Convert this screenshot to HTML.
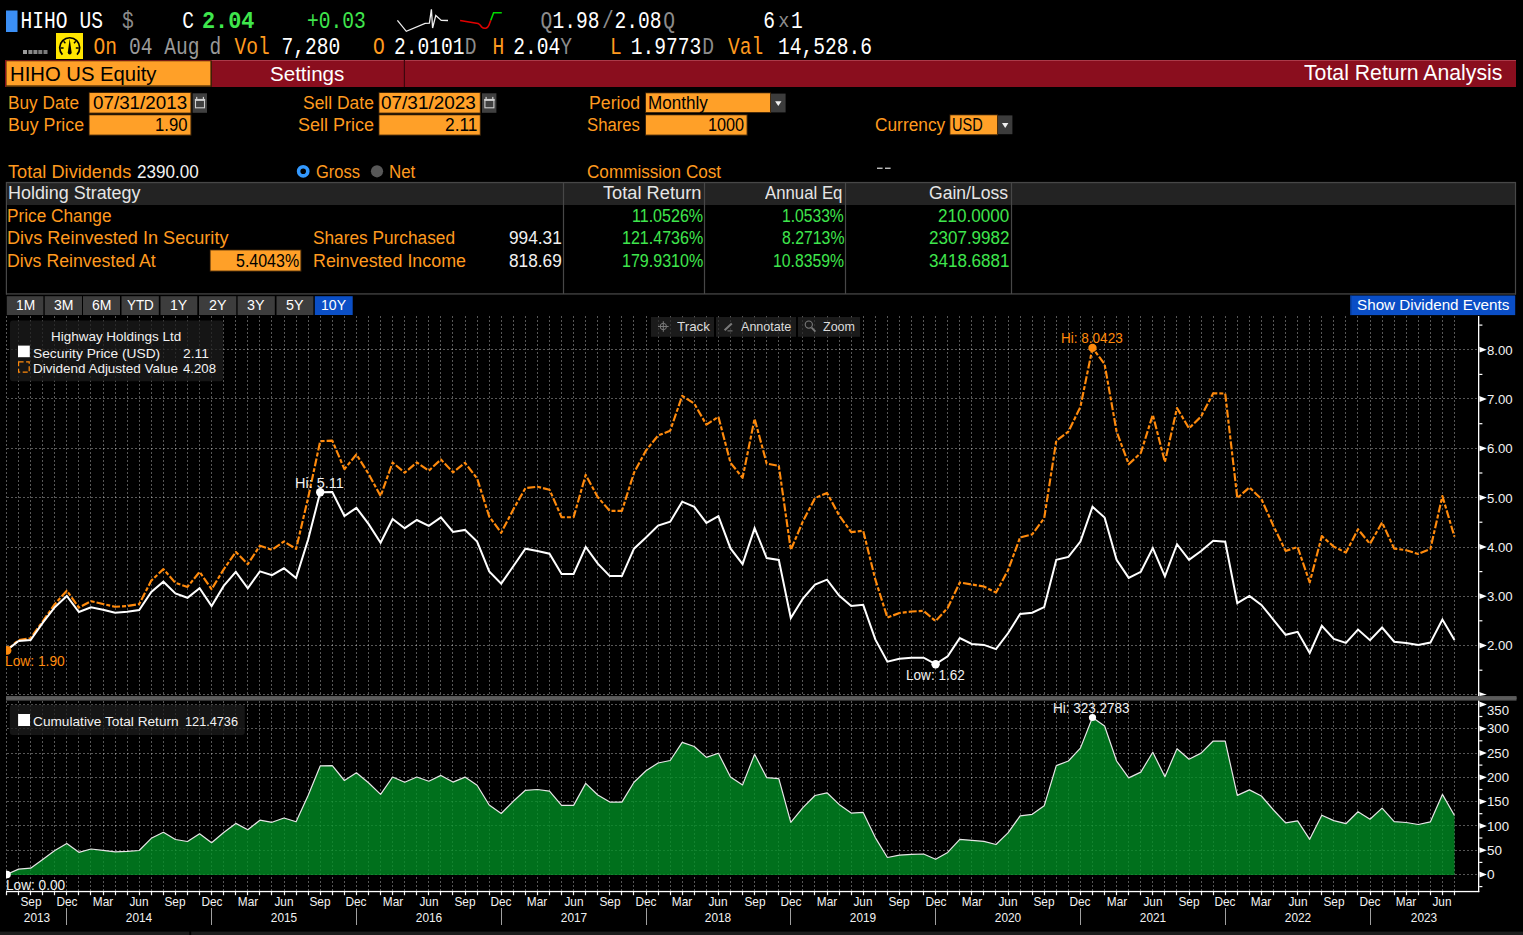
<!DOCTYPE html>
<html><head><meta charset="utf-8"><title>HIHO US Equity - Total Return Analysis</title>
<style>
html,body{margin:0;padding:0;background:#000;}
body{width:1523px;height:935px;position:relative;overflow:hidden;font-family:"Liberation Sans",sans-serif;}
svg{position:absolute;left:0;top:0;}
.a{position:absolute;white-space:pre;line-height:1;}
</style></head><body>
<svg width="1523" height="935" viewBox="0 0 1523 935">
<defs><clipPath id="cl"><rect x="6" y="300" width="1500" height="600"/></clipPath></defs>
<rect x="6" y="10.5" width="11.5" height="21.5" fill="#3b8ff5"/>
<polyline fill="none" stroke="#eee" stroke-width="1.3" stroke-linejoin="miter" points="397.4,20.4 406.3,31.3 425.1,23.4 429.4,23.1 431.4,9.3 432.6,28 435.8,15.4 441.3,20.4 448,20.5"/>
<path fill="none" stroke="#e00000" stroke-width="1.6" d="M460.1,20.5 L478,23.4 Q480,24.5 481.5,26.8 Q483.5,28.6 485.8,28.2 Q488,27.5 488.9,25.2 L490.8,20.2"/>
<polyline fill="none" stroke="#00d800" stroke-width="1.6" points="490.8,20.2 493.6,12.7 501.8,12.7"/>
<rect x="23" y="50" width="4" height="4" fill="#9c9c9c"/>
<rect x="28.4" y="50" width="4" height="4" fill="#8a8a8a"/>
<rect x="33.4" y="50" width="4" height="4" fill="#888"/>
<rect x="38.3" y="50" width="4" height="4" fill="#7c7c7c"/>
<rect x="43.5" y="50" width="4" height="4" fill="#7c7c7c"/>
<rect x="56" y="33" width="27" height="26" fill="#ffe600"/>
<g fill="none" stroke="#000" stroke-width="1.7" stroke-linecap="butt"><path d="M62.4,54.6 A10,10 0 1 1 77.0,54.6"/><path d="M60.6,48 L63.6,48 M75.8,48 L78.8,48 M63.6,41.2 L65.4,43.2 M75.8,41.2 L74,43.2" stroke-width="1.4"/></g>
<path d="M69.7,38.8 L71.6,52.2 Q71.7,54.6 69.7,54.6 Q67.7,54.6 67.8,52.2 Z" fill="#000"/>
<rect x="5" y="60" width="1511" height="27" fill="#8a0e1e"/>
<rect x="211.5" y="60" width="1304.5" height="1" fill="#ab3a49"/>
<rect x="6" y="60.6" width="206" height="26.4" fill="#5a3508"/>
<rect x="6.6" y="61.3" width="204" height="24" fill="#ffa028"/>
<rect x="210.6" y="61" width="1.2" height="26" fill="#3a1a08"/>
<rect x="403.8" y="60" width="1.2" height="27" fill="#3d060d"/>
<rect x="88.8" y="92.2" width="102.60000000000001" height="21.399999999999995" fill="#4a2c0a"/>
<rect x="89.6" y="93" width="100.80000000000001" height="19.599999999999994" fill="#ffa028"/>
<rect x="192.6" y="93.3" width="14.4" height="19.5" fill="#404040"/>
<rect x="195.5" y="99.6" width="9" height="8.2" fill="none" stroke="#d0d0d0" stroke-width="1.1"/>
<rect x="194.9" y="98.89999999999999" width="10.2" height="2" fill="#d0d0d0"/>
<rect x="196.1" y="96.89999999999999" width="1.2" height="2.4" fill="#d0d0d0"/><rect x="202.79999999999998" y="96.89999999999999" width="1.2" height="2.4" fill="#d0d0d0"/>
<rect x="88.8" y="114.5" width="102.60000000000001" height="21.099999999999998" fill="#4a2c0a"/>
<rect x="89.6" y="115.3" width="100.80000000000001" height="19.299999999999997" fill="#ffa028"/>
<rect x="378.59999999999997" y="92.2" width="102.20000000000003" height="21.399999999999995" fill="#4a2c0a"/>
<rect x="379.4" y="93" width="100.40000000000003" height="19.599999999999994" fill="#ffa028"/>
<rect x="482" y="93.3" width="14.4" height="19.5" fill="#404040"/>
<rect x="484.9" y="99.6" width="9" height="8.2" fill="none" stroke="#d0d0d0" stroke-width="1.1"/>
<rect x="484.3" y="98.89999999999999" width="10.2" height="2" fill="#d0d0d0"/>
<rect x="485.5" y="96.89999999999999" width="1.2" height="2.4" fill="#d0d0d0"/><rect x="492.2" y="96.89999999999999" width="1.2" height="2.4" fill="#d0d0d0"/>
<rect x="378.59999999999997" y="114.5" width="102.20000000000003" height="21.099999999999998" fill="#4a2c0a"/>
<rect x="379.4" y="115.3" width="100.40000000000003" height="19.299999999999997" fill="#ffa028"/>
<rect x="645.2" y="92.5" width="125.8" height="20.500000000000004" fill="#4a2c0a"/>
<rect x="646" y="93.3" width="124" height="18.700000000000003" fill="#ffa028"/>
<rect x="771" y="93.6" width="14.6" height="18.8" fill="#3c3c3c"/>
<path d="M775.0999999999999,101.3 L781.5,101.3 L778.3,106.1 Z" fill="#f0f0f0"/>
<rect x="645.2" y="114.5" width="102.40000000000002" height="21.099999999999998" fill="#4a2c0a"/>
<rect x="646" y="115.3" width="100.60000000000002" height="19.299999999999997" fill="#ffa028"/>
<rect x="949.6" y="114.5" width="48.40000000000002" height="20.699999999999992" fill="#4a2c0a"/>
<rect x="950.4" y="115.3" width="46.60000000000002" height="18.89999999999999" fill="#ffa028"/>
<rect x="998" y="115.4" width="14.4" height="18.8" fill="#3c3c3c"/>
<path d="M1002.0,123.10000000000001 L1008.4000000000001,123.10000000000001 L1005.2,127.9 Z" fill="#f0f0f0"/>
<circle cx="303.2" cy="171.3" r="4.6" fill="#000" stroke="#3399ff" stroke-width="3.6"/>
<circle cx="377" cy="171.3" r="6.1" fill="#585858"/>
<rect x="877" y="167.6" width="5.6" height="1.3" fill="#d0d0d0"/><rect x="885" y="167.6" width="5.6" height="1.3" fill="#d0d0d0"/>
<rect x="6" y="182" width="1510" height="23" fill="#232323"/>
<rect x="6" y="181.9" width="1510" height="1.3" fill="#474747"/>
<rect x="6" y="293" width="1510" height="1.8" fill="#323232"/>
<rect x="5.8" y="182" width="1.2" height="112.5" fill="#474747"/><rect x="1514.9" y="182" width="1.2" height="112.5" fill="#474747"/>
<rect x="562.9" y="182" width="1.2" height="112" fill="#474747"/>
<rect x="703.9" y="182" width="1.2" height="112" fill="#474747"/>
<rect x="844.9" y="182" width="1.2" height="112" fill="#474747"/>
<rect x="1010.9" y="182" width="1.2" height="112" fill="#474747"/>
<rect x="209.79999999999998" y="249.6" width="91.59999999999998" height="22.000000000000018" fill="#4a2c0a"/>
<rect x="210.6" y="250.4" width="89.79999999999998" height="20.200000000000017" fill="#ffa028"/>
<rect x="6.8" y="296.2" width="36.6" height="18.8" fill="#3d3d3d"/>
<rect x="44.7" y="296.2" width="37.3" height="18.8" fill="#3d3d3d"/>
<rect x="83" y="296.2" width="37" height="18.8" fill="#3d3d3d"/>
<rect x="121.5" y="296.2" width="37.30000000000001" height="18.8" fill="#3d3d3d"/>
<rect x="160.5" y="296.2" width="36.80000000000001" height="18.8" fill="#3d3d3d"/>
<rect x="199" y="296.2" width="37.30000000000001" height="18.8" fill="#3d3d3d"/>
<rect x="237.6" y="296.2" width="37.20000000000002" height="18.8" fill="#3d3d3d"/>
<rect x="276.5" y="296.2" width="36.89999999999998" height="18.8" fill="#3d3d3d"/>
<rect x="314.8" y="296.2" width="37.89999999999998" height="18.8" fill="#0b4fc6"/>
<rect x="1350.3" y="295.5" width="164.9" height="19.6" fill="#0a4ec6"/><rect x="1350.3" y="295.5" width="1.2" height="19.6" fill="#063a94"/>
<g stroke="rgba(255,255,255,0.34)" stroke-width="1" stroke-dasharray="2 2" shape-rendering="crispEdges" fill="none"><path d="M6.5,316V695.5M6.5,701V891"/><path d="M18.5,316V695.5M18.5,701V891"/><path d="M30.5,316V695.5M30.5,701V891"/><path d="M42.5,316V695.5M42.5,701V891"/><path d="M54.5,316V695.5M54.5,701V891"/><path d="M66.5,316V695.5M66.5,701V891"/><path d="M78.5,316V695.5M78.5,701V891"/><path d="M90.5,316V695.5M90.5,701V891"/><path d="M103.5,316V695.5M103.5,701V891"/><path d="M115.5,316V695.5M115.5,701V891"/><path d="M127.5,316V695.5M127.5,701V891"/><path d="M139.5,316V695.5M139.5,701V891"/><path d="M151.5,316V695.5M151.5,701V891"/><path d="M163.5,316V695.5M163.5,701V891"/><path d="M175.5,316V695.5M175.5,701V891"/><path d="M187.5,316V695.5M187.5,701V891"/><path d="M199.5,316V695.5M199.5,701V891"/><path d="M211.5,316V695.5M211.5,701V891"/><path d="M223.5,316V695.5M223.5,701V891"/><path d="M235.5,316V695.5M235.5,701V891"/><path d="M247.5,316V695.5M247.5,701V891"/><path d="M259.5,316V695.5M259.5,701V891"/><path d="M271.5,316V695.5M271.5,701V891"/><path d="M284.5,316V695.5M284.5,701V891"/><path d="M296.5,316V695.5M296.5,701V891"/><path d="M308.5,316V695.5M308.5,701V891"/><path d="M320.5,316V695.5M320.5,701V891"/><path d="M332.5,316V695.5M332.5,701V891"/><path d="M344.5,316V695.5M344.5,701V891"/><path d="M356.5,316V695.5M356.5,701V891"/><path d="M368.5,316V695.5M368.5,701V891"/><path d="M380.5,316V695.5M380.5,701V891"/><path d="M392.5,316V695.5M392.5,701V891"/><path d="M404.5,316V695.5M404.5,701V891"/><path d="M416.5,316V695.5M416.5,701V891"/><path d="M428.5,316V695.5M428.5,701V891"/><path d="M440.5,316V695.5M440.5,701V891"/><path d="M452.5,316V695.5M452.5,701V891"/><path d="M465.5,316V695.5M465.5,701V891"/><path d="M477.5,316V695.5M477.5,701V891"/><path d="M489.5,316V695.5M489.5,701V891"/><path d="M501.5,316V695.5M501.5,701V891"/><path d="M513.5,316V695.5M513.5,701V891"/><path d="M525.5,316V695.5M525.5,701V891"/><path d="M537.5,316V695.5M537.5,701V891"/><path d="M549.5,316V695.5M549.5,701V891"/><path d="M561.5,316V695.5M561.5,701V891"/><path d="M573.5,316V695.5M573.5,701V891"/><path d="M585.5,316V695.5M585.5,701V891"/><path d="M597.5,316V695.5M597.5,701V891"/><path d="M609.5,316V695.5M609.5,701V891"/><path d="M621.5,316V695.5M621.5,701V891"/><path d="M633.5,316V695.5M633.5,701V891"/><path d="M646.5,316V695.5M646.5,701V891"/><path d="M658.5,316V695.5M658.5,701V891"/><path d="M670.5,316V695.5M670.5,701V891"/><path d="M682.5,316V695.5M682.5,701V891"/><path d="M694.5,316V695.5M694.5,701V891"/><path d="M706.5,316V695.5M706.5,701V891"/><path d="M718.5,316V695.5M718.5,701V891"/><path d="M730.5,316V695.5M730.5,701V891"/><path d="M742.5,316V695.5M742.5,701V891"/><path d="M754.5,316V695.5M754.5,701V891"/><path d="M766.5,316V695.5M766.5,701V891"/><path d="M778.5,316V695.5M778.5,701V891"/><path d="M790.5,316V695.5M790.5,701V891"/><path d="M802.5,316V695.5M802.5,701V891"/><path d="M814.5,316V695.5M814.5,701V891"/><path d="M827.5,316V695.5M827.5,701V891"/><path d="M839.5,316V695.5M839.5,701V891"/><path d="M851.5,316V695.5M851.5,701V891"/><path d="M863.5,316V695.5M863.5,701V891"/><path d="M875.5,316V695.5M875.5,701V891"/><path d="M887.5,316V695.5M887.5,701V891"/><path d="M899.5,316V695.5M899.5,701V891"/><path d="M911.5,316V695.5M911.5,701V891"/><path d="M923.5,316V695.5M923.5,701V891"/><path d="M935.5,316V695.5M935.5,701V891"/><path d="M947.5,316V695.5M947.5,701V891"/><path d="M959.5,316V695.5M959.5,701V891"/><path d="M971.5,316V695.5M971.5,701V891"/><path d="M983.5,316V695.5M983.5,701V891"/><path d="M995.5,316V695.5M995.5,701V891"/><path d="M1008.5,316V695.5M1008.5,701V891"/><path d="M1020.5,316V695.5M1020.5,701V891"/><path d="M1032.5,316V695.5M1032.5,701V891"/><path d="M1044.5,316V695.5M1044.5,701V891"/><path d="M1056.5,316V695.5M1056.5,701V891"/><path d="M1068.5,316V695.5M1068.5,701V891"/><path d="M1080.5,316V695.5M1080.5,701V891"/><path d="M1092.5,316V695.5M1092.5,701V891"/><path d="M1104.5,316V695.5M1104.5,701V891"/><path d="M1116.5,316V695.5M1116.5,701V891"/><path d="M1128.5,316V695.5M1128.5,701V891"/><path d="M1140.5,316V695.5M1140.5,701V891"/><path d="M1152.5,316V695.5M1152.5,701V891"/><path d="M1164.5,316V695.5M1164.5,701V891"/><path d="M1176.5,316V695.5M1176.5,701V891"/><path d="M1189.5,316V695.5M1189.5,701V891"/><path d="M1201.5,316V695.5M1201.5,701V891"/><path d="M1213.5,316V695.5M1213.5,701V891"/><path d="M1225.5,316V695.5M1225.5,701V891"/><path d="M1237.5,316V695.5M1237.5,701V891"/><path d="M1249.5,316V695.5M1249.5,701V891"/><path d="M1261.5,316V695.5M1261.5,701V891"/><path d="M1273.5,316V695.5M1273.5,701V891"/><path d="M1285.5,316V695.5M1285.5,701V891"/><path d="M1297.5,316V695.5M1297.5,701V891"/><path d="M1309.5,316V695.5M1309.5,701V891"/><path d="M1321.5,316V695.5M1321.5,701V891"/><path d="M1333.5,316V695.5M1333.5,701V891"/><path d="M1345.5,316V695.5M1345.5,701V891"/><path d="M1357.5,316V695.5M1357.5,701V891"/><path d="M1370.5,316V695.5M1370.5,701V891"/><path d="M1382.5,316V695.5M1382.5,701V891"/><path d="M1394.5,316V695.5M1394.5,701V891"/><path d="M1406.5,316V695.5M1406.5,701V891"/><path d="M1418.5,316V695.5M1418.5,701V891"/><path d="M1430.5,316V695.5M1430.5,701V891"/><path d="M1442.5,316V695.5M1442.5,701V891"/><path d="M1454.5,316V695.5M1454.5,701V891"/><path d="M7,694.5H1478"/><path d="M7,645.5H1478"/><path d="M7,596.5H1478"/><path d="M7,547.5H1478"/><path d="M7,497.5H1478"/><path d="M7,448.5H1478"/><path d="M7,398.5H1478"/><path d="M7,349.5H1478"/><path d="M7,874.5H1478"/><path d="M7,850.5H1478"/><path d="M7,825.5H1478"/><path d="M7,801.5H1478"/><path d="M7,777.5H1478"/><path d="M7,753.5H1478"/><path d="M7,728.5H1478"/><path d="M7,704.5H1478"/></g>
<polygon points="6.5,875 6.5,874.5 18.6,869.1 30.6,868.2 42.7,859.4 54.8,850.5 66.8,843.5 78.9,852.3 91.0,849.0 103.0,850.4 115.1,851.9 127.2,851.4 139.2,850.5 151.3,838.3 163.4,832.3 175.4,839.5 187.5,841.5 199.6,833.8 211.6,842.7 223.7,832.5 235.8,823.4 247.8,829.8 259.9,820.2 272.0,822.3 284.0,818.0 296.1,821.8 308.2,795.2 320.2,765.9 332.3,765.6 344.4,780.5 356.4,772.8 368.5,782.8 380.6,794.4 392.6,777.0 404.7,782.3 416.8,777.0 428.8,781.2 440.9,775.4 453.0,782.1 465.0,777.1 477.1,785.2 489.2,805.0 501.2,813.5 513.3,801.3 525.4,790.3 537.4,789.5 549.5,791.1 561.6,805.4 573.6,805.4 585.7,783.4 597.8,795.0 609.8,802.1 621.9,802.1 634.0,782.3 646.0,770.8 658.1,763.0 670.2,760.5 682.2,742.4 694.3,746.5 706.4,757.4 718.4,753.2 730.5,777.1 742.6,784.9 754.6,754.3 766.7,777.6 778.8,778.7 790.8,822.3 802.9,807.6 815.0,795.5 827.0,792.8 839.1,804.4 851.2,813.1 863.2,812.4 875.3,837.6 887.4,857.5 899.4,855.1 911.5,854.3 923.6,854.0 935.6,859.3 947.7,852.4 959.8,839.3 971.8,840.3 983.9,841.3 996.0,844.5 1008.0,832.9 1020.1,815.9 1032.2,814.3 1044.2,805.8 1056.3,765.6 1068.4,761.0 1080.4,748.1 1092.5,717.5 1104.6,726.0 1116.6,761.0 1128.7,777.9 1140.8,772.1 1152.8,752.2 1164.9,776.7 1177.0,748.7 1189.0,759.2 1201.1,753.1 1213.2,741.0 1225.2,741.2 1237.3,795.4 1249.4,789.9 1261.4,796.0 1273.5,810.0 1285.6,822.9 1297.6,820.8 1309.7,839.3 1321.8,815.2 1333.8,820.6 1345.9,823.7 1358.0,811.7 1370.0,819.2 1382.1,808.1 1394.2,821.7 1406.2,822.5 1418.3,824.5 1430.4,821.8 1442.4,794.4 1454.5,815.5 1454.5,875" fill="rgb(0,143,36)" fill-opacity="0.78"/>
<polyline points="6.5,874.5 18.6,869.1 30.6,868.2 42.7,859.4 54.8,850.5 66.8,843.5 78.9,852.3 91.0,849.0 103.0,850.4 115.1,851.9 127.2,851.4 139.2,850.5 151.3,838.3 163.4,832.3 175.4,839.5 187.5,841.5 199.6,833.8 211.6,842.7 223.7,832.5 235.8,823.4 247.8,829.8 259.9,820.2 272.0,822.3 284.0,818.0 296.1,821.8 308.2,795.2 320.2,765.9 332.3,765.6 344.4,780.5 356.4,772.8 368.5,782.8 380.6,794.4 392.6,777.0 404.7,782.3 416.8,777.0 428.8,781.2 440.9,775.4 453.0,782.1 465.0,777.1 477.1,785.2 489.2,805.0 501.2,813.5 513.3,801.3 525.4,790.3 537.4,789.5 549.5,791.1 561.6,805.4 573.6,805.4 585.7,783.4 597.8,795.0 609.8,802.1 621.9,802.1 634.0,782.3 646.0,770.8 658.1,763.0 670.2,760.5 682.2,742.4 694.3,746.5 706.4,757.4 718.4,753.2 730.5,777.1 742.6,784.9 754.6,754.3 766.7,777.6 778.8,778.7 790.8,822.3 802.9,807.6 815.0,795.5 827.0,792.8 839.1,804.4 851.2,813.1 863.2,812.4 875.3,837.6 887.4,857.5 899.4,855.1 911.5,854.3 923.6,854.0 935.6,859.3 947.7,852.4 959.8,839.3 971.8,840.3 983.9,841.3 996.0,844.5 1008.0,832.9 1020.1,815.9 1032.2,814.3 1044.2,805.8 1056.3,765.6 1068.4,761.0 1080.4,748.1 1092.5,717.5 1104.6,726.0 1116.6,761.0 1128.7,777.9 1140.8,772.1 1152.8,752.2 1164.9,776.7 1177.0,748.7 1189.0,759.2 1201.1,753.1 1213.2,741.0 1225.2,741.2 1237.3,795.4 1249.4,789.9 1261.4,796.0 1273.5,810.0 1285.6,822.9 1297.6,820.8 1309.7,839.3 1321.8,815.2 1333.8,820.6 1345.9,823.7 1358.0,811.7 1370.0,819.2 1382.1,808.1 1394.2,821.7 1406.2,822.5 1418.3,824.5 1430.4,821.8 1442.4,794.4 1454.5,815.5" fill="none" stroke="#e6e6e6" stroke-width="1.2" stroke-linejoin="round"/>
<g fill="#262626" fill-opacity="0.72"><rect x="651" y="317" width="63" height="19.8"/><rect x="716" y="317" width="80" height="19.8"/><rect x="798" y="317" width="62" height="19.8"/></g>
<rect x="10" y="320.5" width="213.2" height="60.8" rx="3" fill="#1c1c1c" fill-opacity="0.76"/>
<rect x="9.8" y="704.8" width="235" height="30.2" rx="3" fill="#1c1c1c" fill-opacity="0.76"/>
<rect x="6" y="696" width="1510.5" height="4.6" fill="#555"/><rect x="6" y="697.2" width="1510.5" height="2" fill="#5e5e5e"/>
<rect x="1478" y="316" width="1.3" height="380" fill="#fff"/><rect x="1478" y="700.6" width="1.3" height="191.5" fill="#fff"/>
<rect x="6" y="890.9" width="1473.3" height="1.3" fill="#fff"/>
<path d="M1479.2,692.0 L1486.9,694.8 L1479.6,696.0 Z" fill="#fff"/><rect x="1479.2" y="669.6" width="3.2" height="1.2" fill="#fff"/><path d="M1479.2,642.6 L1486.9,645.5 L1479.6,648.4 Z" fill="#fff"/><rect x="1479.2" y="620.2" width="3.2" height="1.2" fill="#fff"/><path d="M1479.2,593.3 L1486.9,596.2 L1479.6,599.1 Z" fill="#fff"/><rect x="1479.2" y="571.0" width="3.2" height="1.2" fill="#fff"/><path d="M1479.2,544.0 L1486.9,546.9 L1479.6,549.8 Z" fill="#fff"/><rect x="1479.2" y="521.6" width="3.2" height="1.2" fill="#fff"/><path d="M1479.2,494.7 L1486.9,497.6 L1479.6,500.5 Z" fill="#fff"/><rect x="1479.2" y="472.4" width="3.2" height="1.2" fill="#fff"/><path d="M1479.2,445.4 L1486.9,448.3 L1479.6,451.2 Z" fill="#fff"/><rect x="1479.2" y="423.1" width="3.2" height="1.2" fill="#fff"/><path d="M1479.2,396.1 L1486.9,399.0 L1479.6,401.9 Z" fill="#fff"/><rect x="1479.2" y="373.8" width="3.2" height="1.2" fill="#fff"/><path d="M1479.2,346.8 L1486.9,349.7 L1479.6,352.6 Z" fill="#fff"/><rect x="1479.2" y="324.5" width="3.2" height="1.2" fill="#fff"/><path d="M1479.2,871.6 L1486.9,874.5 L1479.6,877.4 Z" fill="#fff"/><rect x="1479.2" y="886.0" width="3.2" height="1.2" fill="#fff"/><path d="M1479.2,847.3 L1486.9,850.2 L1479.6,853.1 Z" fill="#fff"/><rect x="1479.2" y="861.8" width="3.2" height="1.2" fill="#fff"/><path d="M1479.2,823.0 L1486.9,825.9 L1479.6,828.8 Z" fill="#fff"/><rect x="1479.2" y="837.4" width="3.2" height="1.2" fill="#fff"/><path d="M1479.2,798.7 L1486.9,801.6 L1479.6,804.5 Z" fill="#fff"/><rect x="1479.2" y="813.1" width="3.2" height="1.2" fill="#fff"/><path d="M1479.2,774.4 L1486.9,777.3 L1479.6,780.2 Z" fill="#fff"/><rect x="1479.2" y="788.9" width="3.2" height="1.2" fill="#fff"/><path d="M1479.2,750.1 L1486.9,753.0 L1479.6,755.9 Z" fill="#fff"/><rect x="1479.2" y="764.5" width="3.2" height="1.2" fill="#fff"/><path d="M1479.2,725.8 L1486.9,728.7 L1479.6,731.6 Z" fill="#fff"/><rect x="1479.2" y="740.2" width="3.2" height="1.2" fill="#fff"/><path d="M1479.2,701.5 L1486.9,704.4 L1479.6,707.3 Z" fill="#fff"/><rect x="1479.2" y="715.9" width="3.2" height="1.2" fill="#fff"/><rect x="5.9" y="892" width="1.2" height="3.2" fill="#f4f4f4"/><rect x="17.9" y="892" width="1.2" height="3.2" fill="#f4f4f4"/><rect x="29.9" y="892" width="1.2" height="3.2" fill="#f4f4f4"/><rect x="41.9" y="892" width="1.2" height="3.2" fill="#f4f4f4"/><rect x="53.9" y="892" width="1.2" height="3.2" fill="#f4f4f4"/><rect x="65.9" y="892" width="1.2" height="3.2" fill="#f4f4f4"/><rect x="77.9" y="892" width="1.2" height="3.2" fill="#f4f4f4"/><rect x="89.9" y="892" width="1.2" height="3.2" fill="#f4f4f4"/><rect x="102.9" y="892" width="1.2" height="3.2" fill="#f4f4f4"/><rect x="114.9" y="892" width="1.2" height="3.2" fill="#f4f4f4"/><rect x="126.9" y="892" width="1.2" height="3.2" fill="#f4f4f4"/><rect x="138.9" y="892" width="1.2" height="3.2" fill="#f4f4f4"/><rect x="150.9" y="892" width="1.2" height="3.2" fill="#f4f4f4"/><rect x="162.9" y="892" width="1.2" height="3.2" fill="#f4f4f4"/><rect x="174.9" y="892" width="1.2" height="3.2" fill="#f4f4f4"/><rect x="186.9" y="892" width="1.2" height="3.2" fill="#f4f4f4"/><rect x="198.9" y="892" width="1.2" height="3.2" fill="#f4f4f4"/><rect x="210.9" y="892" width="1.2" height="3.2" fill="#f4f4f4"/><rect x="222.9" y="892" width="1.2" height="3.2" fill="#f4f4f4"/><rect x="234.9" y="892" width="1.2" height="3.2" fill="#f4f4f4"/><rect x="246.9" y="892" width="1.2" height="3.2" fill="#f4f4f4"/><rect x="258.9" y="892" width="1.2" height="3.2" fill="#f4f4f4"/><rect x="270.9" y="892" width="1.2" height="3.2" fill="#f4f4f4"/><rect x="283.9" y="892" width="1.2" height="3.2" fill="#f4f4f4"/><rect x="295.9" y="892" width="1.2" height="3.2" fill="#f4f4f4"/><rect x="307.9" y="892" width="1.2" height="3.2" fill="#f4f4f4"/><rect x="319.9" y="892" width="1.2" height="3.2" fill="#f4f4f4"/><rect x="331.9" y="892" width="1.2" height="3.2" fill="#f4f4f4"/><rect x="343.9" y="892" width="1.2" height="3.2" fill="#f4f4f4"/><rect x="355.9" y="892" width="1.2" height="3.2" fill="#f4f4f4"/><rect x="367.9" y="892" width="1.2" height="3.2" fill="#f4f4f4"/><rect x="379.9" y="892" width="1.2" height="3.2" fill="#f4f4f4"/><rect x="391.9" y="892" width="1.2" height="3.2" fill="#f4f4f4"/><rect x="403.9" y="892" width="1.2" height="3.2" fill="#f4f4f4"/><rect x="415.9" y="892" width="1.2" height="3.2" fill="#f4f4f4"/><rect x="427.9" y="892" width="1.2" height="3.2" fill="#f4f4f4"/><rect x="439.9" y="892" width="1.2" height="3.2" fill="#f4f4f4"/><rect x="451.9" y="892" width="1.2" height="3.2" fill="#f4f4f4"/><rect x="464.9" y="892" width="1.2" height="3.2" fill="#f4f4f4"/><rect x="476.9" y="892" width="1.2" height="3.2" fill="#f4f4f4"/><rect x="488.9" y="892" width="1.2" height="3.2" fill="#f4f4f4"/><rect x="500.9" y="892" width="1.2" height="3.2" fill="#f4f4f4"/><rect x="512.9" y="892" width="1.2" height="3.2" fill="#f4f4f4"/><rect x="524.9" y="892" width="1.2" height="3.2" fill="#f4f4f4"/><rect x="536.9" y="892" width="1.2" height="3.2" fill="#f4f4f4"/><rect x="548.9" y="892" width="1.2" height="3.2" fill="#f4f4f4"/><rect x="560.9" y="892" width="1.2" height="3.2" fill="#f4f4f4"/><rect x="572.9" y="892" width="1.2" height="3.2" fill="#f4f4f4"/><rect x="584.9" y="892" width="1.2" height="3.2" fill="#f4f4f4"/><rect x="596.9" y="892" width="1.2" height="3.2" fill="#f4f4f4"/><rect x="608.9" y="892" width="1.2" height="3.2" fill="#f4f4f4"/><rect x="620.9" y="892" width="1.2" height="3.2" fill="#f4f4f4"/><rect x="632.9" y="892" width="1.2" height="3.2" fill="#f4f4f4"/><rect x="645.9" y="892" width="1.2" height="3.2" fill="#f4f4f4"/><rect x="657.9" y="892" width="1.2" height="3.2" fill="#f4f4f4"/><rect x="669.9" y="892" width="1.2" height="3.2" fill="#f4f4f4"/><rect x="681.9" y="892" width="1.2" height="3.2" fill="#f4f4f4"/><rect x="693.9" y="892" width="1.2" height="3.2" fill="#f4f4f4"/><rect x="705.9" y="892" width="1.2" height="3.2" fill="#f4f4f4"/><rect x="717.9" y="892" width="1.2" height="3.2" fill="#f4f4f4"/><rect x="729.9" y="892" width="1.2" height="3.2" fill="#f4f4f4"/><rect x="741.9" y="892" width="1.2" height="3.2" fill="#f4f4f4"/><rect x="753.9" y="892" width="1.2" height="3.2" fill="#f4f4f4"/><rect x="765.9" y="892" width="1.2" height="3.2" fill="#f4f4f4"/><rect x="777.9" y="892" width="1.2" height="3.2" fill="#f4f4f4"/><rect x="789.9" y="892" width="1.2" height="3.2" fill="#f4f4f4"/><rect x="801.9" y="892" width="1.2" height="3.2" fill="#f4f4f4"/><rect x="813.9" y="892" width="1.2" height="3.2" fill="#f4f4f4"/><rect x="826.9" y="892" width="1.2" height="3.2" fill="#f4f4f4"/><rect x="838.9" y="892" width="1.2" height="3.2" fill="#f4f4f4"/><rect x="850.9" y="892" width="1.2" height="3.2" fill="#f4f4f4"/><rect x="862.9" y="892" width="1.2" height="3.2" fill="#f4f4f4"/><rect x="874.9" y="892" width="1.2" height="3.2" fill="#f4f4f4"/><rect x="886.9" y="892" width="1.2" height="3.2" fill="#f4f4f4"/><rect x="898.9" y="892" width="1.2" height="3.2" fill="#f4f4f4"/><rect x="910.9" y="892" width="1.2" height="3.2" fill="#f4f4f4"/><rect x="922.9" y="892" width="1.2" height="3.2" fill="#f4f4f4"/><rect x="934.9" y="892" width="1.2" height="3.2" fill="#f4f4f4"/><rect x="946.9" y="892" width="1.2" height="3.2" fill="#f4f4f4"/><rect x="958.9" y="892" width="1.2" height="3.2" fill="#f4f4f4"/><rect x="970.9" y="892" width="1.2" height="3.2" fill="#f4f4f4"/><rect x="982.9" y="892" width="1.2" height="3.2" fill="#f4f4f4"/><rect x="994.9" y="892" width="1.2" height="3.2" fill="#f4f4f4"/><rect x="1007.9" y="892" width="1.2" height="3.2" fill="#f4f4f4"/><rect x="1019.9" y="892" width="1.2" height="3.2" fill="#f4f4f4"/><rect x="1031.9" y="892" width="1.2" height="3.2" fill="#f4f4f4"/><rect x="1043.9" y="892" width="1.2" height="3.2" fill="#f4f4f4"/><rect x="1055.9" y="892" width="1.2" height="3.2" fill="#f4f4f4"/><rect x="1067.9" y="892" width="1.2" height="3.2" fill="#f4f4f4"/><rect x="1079.9" y="892" width="1.2" height="3.2" fill="#f4f4f4"/><rect x="1091.9" y="892" width="1.2" height="3.2" fill="#f4f4f4"/><rect x="1103.9" y="892" width="1.2" height="3.2" fill="#f4f4f4"/><rect x="1115.9" y="892" width="1.2" height="3.2" fill="#f4f4f4"/><rect x="1127.9" y="892" width="1.2" height="3.2" fill="#f4f4f4"/><rect x="1139.9" y="892" width="1.2" height="3.2" fill="#f4f4f4"/><rect x="1151.9" y="892" width="1.2" height="3.2" fill="#f4f4f4"/><rect x="1163.9" y="892" width="1.2" height="3.2" fill="#f4f4f4"/><rect x="1175.9" y="892" width="1.2" height="3.2" fill="#f4f4f4"/><rect x="1188.9" y="892" width="1.2" height="3.2" fill="#f4f4f4"/><rect x="1200.9" y="892" width="1.2" height="3.2" fill="#f4f4f4"/><rect x="1212.9" y="892" width="1.2" height="3.2" fill="#f4f4f4"/><rect x="1224.9" y="892" width="1.2" height="3.2" fill="#f4f4f4"/><rect x="1236.9" y="892" width="1.2" height="3.2" fill="#f4f4f4"/><rect x="1248.9" y="892" width="1.2" height="3.2" fill="#f4f4f4"/><rect x="1260.9" y="892" width="1.2" height="3.2" fill="#f4f4f4"/><rect x="1272.9" y="892" width="1.2" height="3.2" fill="#f4f4f4"/><rect x="1284.9" y="892" width="1.2" height="3.2" fill="#f4f4f4"/><rect x="1296.9" y="892" width="1.2" height="3.2" fill="#f4f4f4"/><rect x="1308.9" y="892" width="1.2" height="3.2" fill="#f4f4f4"/><rect x="1320.9" y="892" width="1.2" height="3.2" fill="#f4f4f4"/><rect x="1332.9" y="892" width="1.2" height="3.2" fill="#f4f4f4"/><rect x="1344.9" y="892" width="1.2" height="3.2" fill="#f4f4f4"/><rect x="1356.9" y="892" width="1.2" height="3.2" fill="#f4f4f4"/><rect x="1369.9" y="892" width="1.2" height="3.2" fill="#f4f4f4"/><rect x="1381.9" y="892" width="1.2" height="3.2" fill="#f4f4f4"/><rect x="1393.9" y="892" width="1.2" height="3.2" fill="#f4f4f4"/><rect x="1405.9" y="892" width="1.2" height="3.2" fill="#f4f4f4"/><rect x="1417.9" y="892" width="1.2" height="3.2" fill="#f4f4f4"/><rect x="1429.9" y="892" width="1.2" height="3.2" fill="#f4f4f4"/><rect x="1441.9" y="892" width="1.2" height="3.2" fill="#f4f4f4"/><rect x="1453.9" y="892" width="1.2" height="3.2" fill="#f4f4f4"/><rect x="66" y="908" width="1" height="17" fill="#a0a0a0"/><rect x="211" y="908" width="1" height="17" fill="#a0a0a0"/><rect x="356" y="908" width="1" height="17" fill="#a0a0a0"/><rect x="501" y="908" width="1" height="17" fill="#a0a0a0"/><rect x="646" y="908" width="1" height="17" fill="#a0a0a0"/><rect x="790" y="908" width="1" height="17" fill="#a0a0a0"/><rect x="935" y="908" width="1" height="17" fill="#a0a0a0"/><rect x="1080" y="908" width="1" height="17" fill="#a0a0a0"/><rect x="1225" y="908" width="1" height="17" fill="#a0a0a0"/><rect x="1370" y="908" width="1" height="17" fill="#a0a0a0"/>
<polyline points="6.5,650.4 18.6,640.1 30.6,638.2 42.7,621.4 54.8,604.2 66.8,590.7 78.9,607.6 91.0,601.2 103.0,604.0 115.1,606.8 127.2,606.0 139.2,604.1 151.3,580.6 163.4,569.1 175.4,582.9 187.5,586.9 199.6,571.9 211.6,589.2 223.7,569.4 235.8,551.9 247.8,564.2 259.9,545.7 272.0,549.9 284.0,541.5 296.1,548.9 308.2,497.5 320.2,441.2 332.3,440.6 344.4,469.2 356.4,454.4 368.5,473.7 380.6,496.1 392.6,462.5 404.7,472.7 416.8,462.5 428.8,470.7 440.9,459.5 453.0,472.3 465.0,462.8 477.1,478.4 489.2,516.5 501.2,532.8 513.3,509.4 525.4,488.1 537.4,486.7 549.5,489.7 561.6,517.2 573.6,517.2 585.7,474.9 597.8,497.2 609.8,510.9 621.9,510.9 634.0,472.8 646.0,450.5 658.1,435.5 670.2,430.7 682.2,395.8 694.3,403.7 706.4,424.7 718.4,416.7 730.5,462.8 742.6,477.8 754.6,418.7 766.7,463.6 778.8,465.8 790.8,549.9 802.9,521.4 815.0,498.1 827.0,492.9 839.1,515.3 851.2,532.1 863.2,530.7 875.3,579.4 887.4,617.6 899.4,613.0 911.5,611.5 923.6,610.9 935.6,621.1 947.7,607.9 959.8,582.5 971.8,584.5 983.9,586.5 996.0,592.6 1008.0,570.3 1020.1,537.4 1032.2,534.4 1044.2,518.1 1056.3,440.6 1068.4,431.6 1080.4,406.9 1092.5,347.9 1104.6,364.2 1116.6,431.6 1128.7,464.2 1140.8,453.0 1152.8,414.8 1164.9,462.0 1177.0,408.0 1189.0,428.3 1201.1,416.5 1213.2,393.2 1225.2,393.6 1237.3,498.0 1249.4,487.4 1261.4,499.1 1273.5,526.1 1285.6,550.9 1297.6,547.0 1309.7,582.5 1321.8,536.1 1333.8,546.6 1345.9,552.6 1358.0,529.3 1370.0,543.8 1382.1,522.5 1394.2,548.6 1406.2,550.2 1418.3,554.0 1430.4,548.9 1442.4,496.0 1454.5,536.8" fill="none" stroke="#ff8a0c" stroke-width="2.15" stroke-dasharray="8 2 4 2" stroke-linejoin="round"/>
<polyline points="6.5,650.4 18.6,640.9 30.6,640.1 42.7,622.9 54.8,607.2 66.8,596.0 78.9,612.0 91.0,607.2 103.0,609.8 115.1,612.8 127.2,611.8 139.2,610.1 151.3,591.9 163.4,581.7 175.4,593.4 187.5,597.8 199.6,588.1 211.6,606.1 223.7,585.9 235.8,571.9 247.8,588.4 259.9,571.3 272.0,575.1 284.0,568.3 296.1,578.0 308.2,539.3 320.2,492.3 332.3,492.0 344.4,516.0 356.4,507.8 368.5,523.9 380.6,542.8 392.6,519.0 404.7,528.2 416.8,520.0 428.8,525.9 440.9,517.4 453.0,532.0 465.0,529.9 477.1,541.6 489.2,571.4 501.2,583.6 513.3,566.3 525.4,548.7 537.4,551.1 549.5,553.7 561.6,573.9 573.6,573.9 585.7,547.0 597.8,563.7 609.8,576.1 621.9,576.1 634.0,548.7 646.0,537.4 658.1,525.6 670.2,521.7 682.2,501.7 694.3,506.9 706.4,522.9 718.4,516.2 730.5,548.4 742.6,564.1 754.6,528.2 766.7,558.1 778.8,559.9 790.8,618.0 802.9,598.5 815.0,584.6 827.0,579.6 839.1,595.6 851.2,605.9 863.2,604.8 875.3,639.4 887.4,661.7 899.4,658.7 911.5,657.7 923.6,657.7 935.6,664.2 947.7,656.3 959.8,638.0 971.8,643.9 983.9,644.9 996.0,649.1 1008.0,633.3 1020.1,613.9 1032.2,612.7 1044.2,607.1 1056.3,559.8 1068.4,556.9 1080.4,541.6 1092.5,506.8 1104.6,517.6 1116.6,559.8 1128.7,577.9 1140.8,571.8 1152.8,548.1 1164.9,576.3 1177.0,544.2 1189.0,559.9 1201.1,551.0 1213.2,540.8 1225.2,541.7 1237.3,603.1 1249.4,595.9 1261.4,604.9 1273.5,619.8 1285.6,634.8 1297.6,631.8 1309.7,653.1 1321.8,625.8 1333.8,638.9 1345.9,642.9 1358.0,629.6 1370.0,640.2 1382.1,627.6 1394.2,641.7 1406.2,642.9 1418.3,644.9 1430.4,642.6 1442.4,619.6 1454.5,640.1" fill="none" stroke="#fff" stroke-width="2" stroke-linejoin="miter"/>
<circle cx="7.0" cy="650.4" r="4.4" fill="#ff8a0c" clip-path="url(#cl)"/>
<circle cx="320.2" cy="492.3" r="4.2" fill="#fff"/>
<circle cx="935.6" cy="664.2" r="4.2" fill="#fff"/>
<circle cx="1092.5" cy="347.9" r="4.2" fill="#ff8a0c"/>
<circle cx="1092.5" cy="717.5" r="3.6" fill="#fff"/>
<circle cx="7.0" cy="874.5" r="3.8" fill="#fff" clip-path="url(#cl)"/>
<rect x="18" y="345.6" width="11.8" height="11.6" fill="#fff"/>
<rect x="18.6" y="361.8" width="10.6" height="10.4" fill="none" stroke="#ff8a0c" stroke-width="1.2" stroke-dasharray="5 2.5"/>
<rect x="18.1" y="714" width="11.9" height="12" fill="#fff"/>
<g fill="none" stroke="#7a7a7a" stroke-width="1"><circle cx="663.3" cy="326.5" r="3.2"/><path d="M663.3,321.2V331.8M658,326.5H668.6"/></g>
<g fill="none" stroke="#7a7a7a"><path d="M724.6,330.2 L731.8,323.4" stroke-width="2"/><path d="M727.5,330.9H732.5" stroke-width="1"/></g>
<g fill="none" stroke="#7a7a7a"><circle cx="808.8" cy="324.6" r="3.6" stroke-width="1.1"/><path d="M811.6,327.6 L815.4,331.6" stroke-width="1.8"/></g>
<rect x="0" y="931.6" width="189.3" height="3.4" fill="#1d1d1d"/><rect x="191.2" y="931.6" width="1332" height="3.4" fill="#1d1d1d"/>
</svg>
<span class="a" style="font-family:'Liberation Mono',monospace;font-size:19.6px;color:#fff;top:14.08px;left:20.60px;transform-origin:0 15.02px;transform:scale(1.0000,1.2);">HIHO US</span>
<span class="a" style="font-family:'Liberation Mono',monospace;font-size:19.6px;color:#8c8c8c;top:14.08px;left:122.00px;transform-origin:0 15.02px;transform:scale(1.0000,1.2);">$</span>
<span class="a" style="font-family:'Liberation Mono',monospace;font-size:19.6px;color:#fff;top:14.08px;left:182.20px;transform-origin:0 15.02px;transform:scale(1.0000,1.2);">C</span>
<span class="a" style="font-family:'Liberation Mono',monospace;font-size:19.6px;color:#3fe64d;top:14.08px;font-weight:bold;left:201.50px;transform-origin:0 15.02px;transform:scale(1.1150,1.2);">2.04</span>
<span class="a" style="font-family:'Liberation Mono',monospace;font-size:19.6px;color:#3fe64d;top:14.08px;left:307.00px;transform-origin:0 15.02px;transform:scale(1.0000,1.2);">+0.03</span>
<span class="a" style="font-family:'Liberation Mono',monospace;font-size:19.6px;color:#8c8c8c;top:14.08px;left:540.50px;transform-origin:0 15.02px;transform:scale(1.0000,1.2);">Q</span>
<span class="a" style="font-family:'Liberation Mono',monospace;font-size:19.6px;color:#fff;top:14.08px;left:552.50px;transform-origin:0 15.02px;transform:scale(1.0000,1.2);">1.98</span>
<span class="a" style="font-family:'Liberation Mono',monospace;font-size:19.6px;color:#8c8c8c;top:14.08px;left:602.00px;transform-origin:0 15.02px;transform:scale(1.0000,1.2);">/</span>
<span class="a" style="font-family:'Liberation Mono',monospace;font-size:19.6px;color:#fff;top:14.08px;left:614.50px;transform-origin:0 15.02px;transform:scale(1.0000,1.2);">2.08</span>
<span class="a" style="font-family:'Liberation Mono',monospace;font-size:19.6px;color:#8c8c8c;top:14.08px;left:663.20px;transform-origin:0 15.02px;transform:scale(1.0000,1.2);">Q</span>
<span class="a" style="font-family:'Liberation Mono',monospace;font-size:19.6px;color:#fff;top:14.08px;left:763.30px;transform-origin:0 15.02px;transform:scale(1.0000,1.2);">6</span>
<span class="a" style="font-family:'Liberation Mono',monospace;font-size:18.5px;color:#8c8c8c;top:13.72px;left:778.30px;transform-origin:0 14.18px;transform:scale(1.0000,1.1);">x</span>
<span class="a" style="font-family:'Liberation Mono',monospace;font-size:19.6px;color:#fff;top:14.08px;left:791.00px;transform-origin:0 15.02px;transform:scale(1.0000,1.2);">1</span>
<span class="a" style="font-family:'Liberation Mono',monospace;font-size:19.6px;color:#ff9a1f;top:40.08px;left:93.60px;transform-origin:0 15.02px;transform:scale(1.0000,1.2);">On</span>
<span class="a" style="font-family:'Liberation Mono',monospace;font-size:19.6px;color:#9a9a9a;top:40.08px;left:128.90px;transform-origin:0 15.02px;transform:scale(1.0000,1.2);">04 Aug</span>
<span class="a" style="font-family:'Liberation Mono',monospace;font-size:19.6px;color:#9a9a9a;top:40.08px;left:209.50px;transform-origin:0 15.02px;transform:scale(1.0000,1.2);">d</span>
<span class="a" style="font-family:'Liberation Mono',monospace;font-size:19.6px;color:#ff9a1f;top:40.08px;left:234.50px;transform-origin:0 15.02px;transform:scale(1.0000,1.2);">Vol</span>
<span class="a" style="font-family:'Liberation Mono',monospace;font-size:19.6px;color:#fff;top:40.08px;left:281.50px;transform-origin:0 15.02px;transform:scale(1.0000,1.2);">7,280</span>
<span class="a" style="font-family:'Liberation Mono',monospace;font-size:19.6px;color:#ff9a1f;top:40.08px;left:373.00px;transform-origin:0 15.02px;transform:scale(1.0000,1.2);">O</span>
<span class="a" style="font-family:'Liberation Mono',monospace;font-size:19.6px;color:#fff;top:40.08px;left:394.00px;transform-origin:0 15.02px;transform:scale(1.0000,1.2);">2.0101</span>
<span class="a" style="font-family:'Liberation Mono',monospace;font-size:19.6px;color:#8c8c8c;top:40.08px;left:464.70px;transform-origin:0 15.02px;transform:scale(1.0000,1.2);">D</span>
<span class="a" style="font-family:'Liberation Mono',monospace;font-size:19.6px;color:#ff9a1f;top:40.08px;left:492.60px;transform-origin:0 15.02px;transform:scale(1.0000,1.2);">H</span>
<span class="a" style="font-family:'Liberation Mono',monospace;font-size:19.6px;color:#fff;top:40.08px;left:513.30px;transform-origin:0 15.02px;transform:scale(1.0000,1.2);">2.04</span>
<span class="a" style="font-family:'Liberation Mono',monospace;font-size:19.6px;color:#8c8c8c;top:40.08px;left:560.30px;transform-origin:0 15.02px;transform:scale(1.0000,1.2);">Y</span>
<span class="a" style="font-family:'Liberation Mono',monospace;font-size:19.6px;color:#ff9a1f;top:40.08px;left:610.00px;transform-origin:0 15.02px;transform:scale(1.0000,1.2);">L</span>
<span class="a" style="font-family:'Liberation Mono',monospace;font-size:19.6px;color:#fff;top:40.08px;left:630.70px;transform-origin:0 15.02px;transform:scale(1.0000,1.2);">1.9773</span>
<span class="a" style="font-family:'Liberation Mono',monospace;font-size:19.6px;color:#8c8c8c;top:40.08px;left:702.30px;transform-origin:0 15.02px;transform:scale(1.0000,1.2);">D</span>
<span class="a" style="font-family:'Liberation Mono',monospace;font-size:19.6px;color:#ff9a1f;top:40.08px;left:728.00px;transform-origin:0 15.02px;transform:scale(1.0000,1.2);">Val</span>
<span class="a" style="font-family:'Liberation Mono',monospace;font-size:19.6px;color:#fff;top:40.08px;left:778.00px;transform-origin:0 15.02px;transform:scale(1.0000,1.2);">14,528.6</span>
<span class="a" style="font-family:'Liberation Sans',sans-serif;font-size:20.7px;color:#000;top:63.88px;left:10.20px;transform-origin:0 17.52px;transform:scale(0.9796,1.0);">HIHO US Equity</span>
<span class="a" style="font-family:'Liberation Sans',sans-serif;font-size:20.7px;color:#fff;top:63.88px;left:270.00px;transform-origin:0 17.52px;transform:scale(0.9940,1.0);">Settings</span>
<span class="a" style="font-family:'Liberation Sans',sans-serif;font-size:21.4px;color:#fff;top:63.08px;left:1303.60px;transform-origin:0 18.12px;transform:scale(0.9932,1.0);">Total Return Analysis</span>
<span class="a" style="font-family:'Liberation Sans',sans-serif;font-size:17.5px;color:#ff9a1f;top:95.09px;left:7.50px;transform-origin:0 14.81px;transform:scale(0.9863,1.0);">Buy Date</span>
<span class="a" style="font-family:'Liberation Sans',sans-serif;font-size:17.5px;color:#000;top:95.09px;left:92.90px;transform-origin:0 14.81px;transform:scale(1.0743,1.0);">07/31/2013</span>
<span class="a" style="font-family:'Liberation Sans',sans-serif;font-size:17.5px;color:#ff9a1f;top:117.29px;left:7.50px;transform-origin:0 14.81px;transform:scale(1.0161,1.0);">Buy Price</span>
<span class="a" style="font-family:'Liberation Sans',sans-serif;font-size:17.5px;color:#000;top:117.29px;left:155.40px;transform-origin:0 14.81px;transform:scale(0.9512,1.0);">1.90</span>
<span class="a" style="font-family:'Liberation Sans',sans-serif;font-size:17.5px;color:#ff9a1f;top:95.09px;left:302.90px;transform-origin:0 14.81px;transform:scale(0.9984,1.0);">Sell Date</span>
<span class="a" style="font-family:'Liberation Sans',sans-serif;font-size:17.5px;color:#000;top:95.09px;left:381.40px;transform-origin:0 14.81px;transform:scale(1.0834,1.0);">07/31/2023</span>
<span class="a" style="font-family:'Liberation Sans',sans-serif;font-size:17.5px;color:#ff9a1f;top:117.29px;left:297.70px;transform-origin:0 14.81px;transform:scale(1.0295,1.0);">Sell Price</span>
<span class="a" style="font-family:'Liberation Sans',sans-serif;font-size:17.5px;color:#000;top:117.29px;left:444.50px;transform-origin:0 14.81px;transform:scale(0.9919,1.0);">2.11</span>
<span class="a" style="font-family:'Liberation Sans',sans-serif;font-size:17.5px;color:#ff9a1f;top:95.09px;left:589.00px;transform-origin:0 14.81px;transform:scale(1.0120,1.0);">Period</span>
<span class="a" style="font-family:'Liberation Sans',sans-serif;font-size:17.5px;color:#000;top:95.09px;left:648.00px;transform-origin:0 14.81px;transform:scale(0.9758,1.0);">Monthly</span>
<span class="a" style="font-family:'Liberation Sans',sans-serif;font-size:17.5px;color:#ff9a1f;top:117.29px;left:587.30px;transform-origin:0 14.81px;transform:scale(0.9540,1.0);">Shares</span>
<span class="a" style="font-family:'Liberation Sans',sans-serif;font-size:17.5px;color:#000;top:117.29px;left:707.50px;transform-origin:0 14.81px;transform:scale(0.9271,1.0);">1000</span>
<span class="a" style="font-family:'Liberation Sans',sans-serif;font-size:17.5px;color:#ff9a1f;top:117.29px;left:874.80px;transform-origin:0 14.81px;transform:scale(0.9887,1.0);">Currency</span>
<span class="a" style="font-family:'Liberation Sans',sans-serif;font-size:17.5px;color:#000;top:117.29px;left:951.90px;transform-origin:0 14.81px;transform:scale(0.8308,1.0);">USD</span>
<span class="a" style="font-family:'Liberation Sans',sans-serif;font-size:17.5px;color:#ff9a1f;top:164.09px;left:7.50px;transform-origin:0 14.81px;transform:scale(1.0390,1.0);">Total Dividends</span>
<span class="a" style="font-family:'Liberation Sans',sans-serif;font-size:17.5px;color:#f2f2f2;top:164.09px;left:137.30px;transform-origin:0 14.81px;transform:scale(0.9753,1.0);">2390.00</span>
<span class="a" style="font-family:'Liberation Sans',sans-serif;font-size:17.5px;color:#ff9a1f;top:164.09px;left:315.50px;transform-origin:0 14.81px;transform:scale(0.9424,1.0);">Gross</span>
<span class="a" style="font-family:'Liberation Sans',sans-serif;font-size:17.5px;color:#ff9a1f;top:164.09px;left:389.20px;transform-origin:0 14.81px;transform:scale(0.9657,1.0);">Net</span>
<span class="a" style="font-family:'Liberation Sans',sans-serif;font-size:17.5px;color:#ff9a1f;top:164.09px;left:587.30px;transform-origin:0 14.81px;transform:scale(0.9779,1.0);">Commission Cost</span>
<span class="a" style="font-family:'Liberation Sans',sans-serif;font-size:17.5px;color:#e6e6e6;top:185.09px;left:7.50px;transform-origin:0 14.81px;transform:scale(1.0240,1.0);">Holding Strategy</span>
<span class="a" style="font-family:'Liberation Sans',sans-serif;font-size:17.5px;color:#e6e6e6;top:185.09px;left:603.00px;transform-origin:0 14.81px;transform:scale(1.0428,1.0);">Total Return</span>
<span class="a" style="font-family:'Liberation Sans',sans-serif;font-size:17.5px;color:#e6e6e6;top:185.09px;left:764.60px;transform-origin:0 14.81px;transform:scale(0.9583,1.0);">Annual Eq</span>
<span class="a" style="font-family:'Liberation Sans',sans-serif;font-size:17.5px;color:#e6e6e6;top:185.09px;left:929.00px;transform-origin:0 14.81px;transform:scale(1.0026,1.0);">Gain/Loss</span>
<span class="a" style="font-family:'Liberation Sans',sans-serif;font-size:17.5px;color:#ff9a1f;top:207.99px;left:6.50px;transform-origin:0 14.81px;transform:scale(0.9854,1.0);">Price Change</span>
<span class="a" style="font-family:'Liberation Sans',sans-serif;font-size:17.5px;color:#3fe64d;top:207.99px;left:632.00px;transform-origin:0 14.81px;transform:scale(0.9170,1.0);">11.0526%</span>
<span class="a" style="font-family:'Liberation Sans',sans-serif;font-size:17.5px;color:#3fe64d;top:207.99px;left:782.40px;transform-origin:0 14.81px;transform:scale(0.8944,1.0);">1.0533%</span>
<span class="a" style="font-family:'Liberation Sans',sans-serif;font-size:17.5px;color:#3fe64d;top:207.99px;left:938.40px;transform-origin:0 14.81px;transform:scale(0.9767,1.0);">210.0000</span>
<span class="a" style="font-family:'Liberation Sans',sans-serif;font-size:17.5px;color:#ff9a1f;top:230.49px;left:6.50px;transform-origin:0 14.81px;transform:scale(1.0351,1.0);">Divs Reinvested In Security</span>
<span class="a" style="font-family:'Liberation Sans',sans-serif;font-size:17.5px;color:#ff9a1f;top:230.49px;left:313.00px;transform-origin:0 14.81px;transform:scale(0.9862,1.0);">Shares Purchased</span>
<span class="a" style="font-family:'Liberation Sans',sans-serif;font-size:17.5px;color:#f0f0f0;top:230.49px;left:509.20px;transform-origin:0 14.81px;transform:scale(0.9863,1.0);">994.31</span>
<span class="a" style="font-family:'Liberation Sans',sans-serif;font-size:17.5px;color:#3fe64d;top:230.49px;left:621.90px;transform-origin:0 14.81px;transform:scale(0.9169,1.0);">121.4736%</span>
<span class="a" style="font-family:'Liberation Sans',sans-serif;font-size:17.5px;color:#3fe64d;top:230.49px;left:781.70px;transform-origin:0 14.81px;transform:scale(0.9046,1.0);">8.2713%</span>
<span class="a" style="font-family:'Liberation Sans',sans-serif;font-size:17.5px;color:#3fe64d;top:230.49px;left:929.20px;transform-origin:0 14.81px;transform:scale(0.9730,1.0);">2307.9982</span>
<span class="a" style="font-family:'Liberation Sans',sans-serif;font-size:17.5px;color:#ff9a1f;top:252.69px;left:6.50px;transform-origin:0 14.81px;transform:scale(1.0131,1.0);">Divs Reinvested At</span>
<span class="a" style="font-family:'Liberation Sans',sans-serif;font-size:17.5px;color:#000;top:252.69px;left:235.60px;transform-origin:0 14.81px;transform:scale(0.9133,1.0);">5.4043%</span>
<span class="a" style="font-family:'Liberation Sans',sans-serif;font-size:17.5px;color:#ff9a1f;top:252.69px;left:313.00px;transform-origin:0 14.81px;transform:scale(1.0213,1.0);">Reinvested Income</span>
<span class="a" style="font-family:'Liberation Sans',sans-serif;font-size:17.5px;color:#f0f0f0;top:252.69px;left:509.20px;transform-origin:0 14.81px;transform:scale(0.9863,1.0);">818.69</span>
<span class="a" style="font-family:'Liberation Sans',sans-serif;font-size:17.5px;color:#3fe64d;top:252.69px;left:621.90px;transform-origin:0 14.81px;transform:scale(0.9169,1.0);">179.9310%</span>
<span class="a" style="font-family:'Liberation Sans',sans-serif;font-size:17.5px;color:#3fe64d;top:252.69px;left:773.20px;transform-origin:0 14.81px;transform:scale(0.9007,1.0);">10.8359%</span>
<span class="a" style="font-family:'Liberation Sans',sans-serif;font-size:17.5px;color:#3fe64d;top:252.69px;left:929.20px;transform-origin:0 14.81px;transform:scale(0.9730,1.0);">3418.6881</span>
<span class="a" style="font-family:'Liberation Sans',sans-serif;font-size:14.4px;color:#fff;top:297.61px;left:16.30px;transform-origin:0 12.19px;transform:scale(0.9550,1.0);">1M</span>
<span class="a" style="font-family:'Liberation Sans',sans-serif;font-size:14.4px;color:#fff;top:297.61px;left:53.80px;transform-origin:0 12.19px;transform:scale(0.9750,1.0);">3M</span>
<span class="a" style="font-family:'Liberation Sans',sans-serif;font-size:14.4px;color:#fff;top:297.61px;left:91.80px;transform-origin:0 12.19px;transform:scale(0.9750,1.0);">6M</span>
<span class="a" style="font-family:'Liberation Sans',sans-serif;font-size:14.4px;color:#fff;top:297.61px;left:127.00px;transform-origin:0 12.19px;transform:scale(0.9307,1.0);">YTD</span>
<span class="a" style="font-family:'Liberation Sans',sans-serif;font-size:14.4px;color:#fff;top:297.61px;left:170.30px;transform-origin:0 12.19px;transform:scale(0.9824,1.0);">1Y</span>
<span class="a" style="font-family:'Liberation Sans',sans-serif;font-size:14.4px;color:#fff;top:297.61px;left:208.80px;transform-origin:0 12.19px;transform:scale(0.9938,1.0);">2Y</span>
<span class="a" style="font-family:'Liberation Sans',sans-serif;font-size:14.4px;color:#fff;top:297.61px;left:247.00px;transform-origin:0 12.19px;transform:scale(0.9938,1.0);">3Y</span>
<span class="a" style="font-family:'Liberation Sans',sans-serif;font-size:14.4px;color:#fff;top:297.61px;left:285.80px;transform-origin:0 12.19px;transform:scale(0.9938,1.0);">5Y</span>
<span class="a" style="font-family:'Liberation Sans',sans-serif;font-size:14.4px;color:#fff;top:297.61px;left:321.30px;transform-origin:0 12.19px;transform:scale(0.9762,1.0);">10Y</span>
<span class="a" style="font-family:'Liberation Sans',sans-serif;font-size:15.2px;color:#fff;top:296.83px;left:1357.20px;transform-origin:0 12.87px;transform:scale(1.0028,1.0);">Show Dividend Events</span>
<span class="a" style="font-family:'Liberation Sans',sans-serif;font-size:12.6px;color:#dcdcdc;top:321.13px;left:676.80px;transform-origin:0 10.67px;transform:scale(1.0634,1.0);">Track</span>
<span class="a" style="font-family:'Liberation Sans',sans-serif;font-size:12.6px;color:#dcdcdc;top:321.13px;left:741.40px;transform-origin:0 10.67px;transform:scale(0.9976,1.0);">Annotate</span>
<span class="a" style="font-family:'Liberation Sans',sans-serif;font-size:12.6px;color:#dcdcdc;top:321.13px;left:823.40px;transform-origin:0 10.67px;transform:scale(0.9937,1.0);">Zoom</span>
<span class="a" style="font-family:'Liberation Sans',sans-serif;font-size:12.6px;color:#f2f2f2;top:331.33px;left:51.00px;transform-origin:0 10.67px;transform:scale(1.0689,1.0);">Highway Holdings Ltd</span>
<span class="a" style="font-family:'Liberation Sans',sans-serif;font-size:12.6px;color:#f2f2f2;top:347.53px;left:33.00px;transform-origin:0 10.67px;transform:scale(1.0949,1.0);">Security Price (USD)</span>
<span class="a" style="font-family:'Liberation Sans',sans-serif;font-size:12.6px;color:#f2f2f2;top:347.53px;left:182.90px;transform-origin:0 10.67px;transform:scale(1.0985,1.0);">2.11</span>
<span class="a" style="font-family:'Liberation Sans',sans-serif;font-size:12.6px;color:#f2f2f2;top:363.03px;left:33.00px;transform-origin:0 10.67px;transform:scale(1.0694,1.0);">Dividend Adjusted Value</span>
<span class="a" style="font-family:'Liberation Sans',sans-serif;font-size:12.6px;color:#f2f2f2;top:363.03px;left:182.90px;transform-origin:0 10.67px;transform:scale(1.0471,1.0);">4.208</span>
<span class="a" style="font-family:'Liberation Sans',sans-serif;font-size:12.6px;color:#f2f2f2;top:716.33px;left:32.90px;transform-origin:0 10.67px;transform:scale(1.0859,1.0);">Cumulative Total Return</span>
<span class="a" style="font-family:'Liberation Sans',sans-serif;font-size:12.6px;color:#f2f2f2;top:716.33px;left:184.70px;transform-origin:0 10.67px;transform:scale(1.0089,1.0);">121.4736</span>
<span class="a" style="font-family:'Liberation Sans',sans-serif;font-size:12.6px;color:#f2f2f2;top:640.43px;left:1487.20px;transform-origin:0 10.67px;transform:scale(1.0483,1.0);">2.00</span>
<span class="a" style="font-family:'Liberation Sans',sans-serif;font-size:12.6px;color:#f2f2f2;top:591.13px;left:1487.20px;transform-origin:0 10.67px;transform:scale(1.0483,1.0);">3.00</span>
<span class="a" style="font-family:'Liberation Sans',sans-serif;font-size:12.6px;color:#f2f2f2;top:541.83px;left:1487.20px;transform-origin:0 10.67px;transform:scale(1.0483,1.0);">4.00</span>
<span class="a" style="font-family:'Liberation Sans',sans-serif;font-size:12.6px;color:#f2f2f2;top:492.53px;left:1487.20px;transform-origin:0 10.67px;transform:scale(1.0483,1.0);">5.00</span>
<span class="a" style="font-family:'Liberation Sans',sans-serif;font-size:12.6px;color:#f2f2f2;top:443.23px;left:1487.20px;transform-origin:0 10.67px;transform:scale(1.0483,1.0);">6.00</span>
<span class="a" style="font-family:'Liberation Sans',sans-serif;font-size:12.6px;color:#f2f2f2;top:393.93px;left:1487.20px;transform-origin:0 10.67px;transform:scale(1.0483,1.0);">7.00</span>
<span class="a" style="font-family:'Liberation Sans',sans-serif;font-size:12.6px;color:#f2f2f2;top:344.63px;left:1487.20px;transform-origin:0 10.67px;transform:scale(1.0483,1.0);">8.00</span>
<span class="a" style="font-family:'Liberation Sans',sans-serif;font-size:12.6px;color:#f2f2f2;top:869.13px;left:1487.10px;transform-origin:0 10.67px;transform:scale(1.0833,1.0);">0</span>
<span class="a" style="font-family:'Liberation Sans',sans-serif;font-size:12.6px;color:#f2f2f2;top:844.83px;left:1487.10px;transform-origin:0 10.67px;transform:scale(1.0631,1.0);">50</span>
<span class="a" style="font-family:'Liberation Sans',sans-serif;font-size:12.6px;color:#f2f2f2;top:820.53px;left:1487.10px;transform-origin:0 10.67px;transform:scale(1.0468,1.0);">100</span>
<span class="a" style="font-family:'Liberation Sans',sans-serif;font-size:12.6px;color:#f2f2f2;top:796.23px;left:1487.10px;transform-origin:0 10.67px;transform:scale(1.0468,1.0);">150</span>
<span class="a" style="font-family:'Liberation Sans',sans-serif;font-size:12.6px;color:#f2f2f2;top:771.93px;left:1487.10px;transform-origin:0 10.67px;transform:scale(1.0468,1.0);">200</span>
<span class="a" style="font-family:'Liberation Sans',sans-serif;font-size:12.6px;color:#f2f2f2;top:747.63px;left:1487.10px;transform-origin:0 10.67px;transform:scale(1.0468,1.0);">250</span>
<span class="a" style="font-family:'Liberation Sans',sans-serif;font-size:12.6px;color:#f2f2f2;top:723.33px;left:1487.10px;transform-origin:0 10.67px;transform:scale(1.0468,1.0);">300</span>
<span class="a" style="font-family:'Liberation Sans',sans-serif;font-size:12.6px;color:#f2f2f2;top:704.53px;left:1487.10px;transform-origin:0 10.67px;transform:scale(1.0468,1.0);">350</span>
<span class="a" style="font-family:'Liberation Sans',sans-serif;font-size:12.6px;color:#f2f2f2;top:896.13px;left:30.63px;transform-origin:0 10.67px;transform:translateX(-47.000%) scale(0.9400,1.0);">Sep</span>
<span class="a" style="font-family:'Liberation Sans',sans-serif;font-size:12.6px;color:#f2f2f2;top:896.13px;left:66.83px;transform-origin:0 10.67px;transform:translateX(-47.000%) scale(0.9400,1.0);">Dec</span>
<span class="a" style="font-family:'Liberation Sans',sans-serif;font-size:12.6px;color:#f2f2f2;top:896.13px;left:103.03px;transform-origin:0 10.67px;transform:translateX(-47.000%) scale(0.9400,1.0);">Mar</span>
<span class="a" style="font-family:'Liberation Sans',sans-serif;font-size:12.6px;color:#f2f2f2;top:896.13px;left:139.23px;transform-origin:0 10.67px;transform:translateX(-47.000%) scale(0.9400,1.0);">Jun</span>
<span class="a" style="font-family:'Liberation Sans',sans-serif;font-size:12.6px;color:#f2f2f2;top:896.13px;left:175.43px;transform-origin:0 10.67px;transform:translateX(-47.000%) scale(0.9400,1.0);">Sep</span>
<span class="a" style="font-family:'Liberation Sans',sans-serif;font-size:12.6px;color:#f2f2f2;top:896.13px;left:211.63px;transform-origin:0 10.67px;transform:translateX(-47.000%) scale(0.9400,1.0);">Dec</span>
<span class="a" style="font-family:'Liberation Sans',sans-serif;font-size:12.6px;color:#f2f2f2;top:896.13px;left:247.83px;transform-origin:0 10.67px;transform:translateX(-47.000%) scale(0.9400,1.0);">Mar</span>
<span class="a" style="font-family:'Liberation Sans',sans-serif;font-size:12.6px;color:#f2f2f2;top:896.13px;left:284.03px;transform-origin:0 10.67px;transform:translateX(-47.000%) scale(0.9400,1.0);">Jun</span>
<span class="a" style="font-family:'Liberation Sans',sans-serif;font-size:12.6px;color:#f2f2f2;top:896.13px;left:320.23px;transform-origin:0 10.67px;transform:translateX(-47.000%) scale(0.9400,1.0);">Sep</span>
<span class="a" style="font-family:'Liberation Sans',sans-serif;font-size:12.6px;color:#f2f2f2;top:896.13px;left:356.43px;transform-origin:0 10.67px;transform:translateX(-47.000%) scale(0.9400,1.0);">Dec</span>
<span class="a" style="font-family:'Liberation Sans',sans-serif;font-size:12.6px;color:#f2f2f2;top:896.13px;left:392.63px;transform-origin:0 10.67px;transform:translateX(-47.000%) scale(0.9400,1.0);">Mar</span>
<span class="a" style="font-family:'Liberation Sans',sans-serif;font-size:12.6px;color:#f2f2f2;top:896.13px;left:428.83px;transform-origin:0 10.67px;transform:translateX(-47.000%) scale(0.9400,1.0);">Jun</span>
<span class="a" style="font-family:'Liberation Sans',sans-serif;font-size:12.6px;color:#f2f2f2;top:896.13px;left:465.03px;transform-origin:0 10.67px;transform:translateX(-47.000%) scale(0.9400,1.0);">Sep</span>
<span class="a" style="font-family:'Liberation Sans',sans-serif;font-size:12.6px;color:#f2f2f2;top:896.13px;left:501.23px;transform-origin:0 10.67px;transform:translateX(-47.000%) scale(0.9400,1.0);">Dec</span>
<span class="a" style="font-family:'Liberation Sans',sans-serif;font-size:12.6px;color:#f2f2f2;top:896.13px;left:537.43px;transform-origin:0 10.67px;transform:translateX(-47.000%) scale(0.9400,1.0);">Mar</span>
<span class="a" style="font-family:'Liberation Sans',sans-serif;font-size:12.6px;color:#f2f2f2;top:896.13px;left:573.63px;transform-origin:0 10.67px;transform:translateX(-47.000%) scale(0.9400,1.0);">Jun</span>
<span class="a" style="font-family:'Liberation Sans',sans-serif;font-size:12.6px;color:#f2f2f2;top:896.13px;left:609.84px;transform-origin:0 10.67px;transform:translateX(-47.000%) scale(0.9400,1.0);">Sep</span>
<span class="a" style="font-family:'Liberation Sans',sans-serif;font-size:12.6px;color:#f2f2f2;top:896.13px;left:646.04px;transform-origin:0 10.67px;transform:translateX(-47.000%) scale(0.9400,1.0);">Dec</span>
<span class="a" style="font-family:'Liberation Sans',sans-serif;font-size:12.6px;color:#f2f2f2;top:896.13px;left:682.24px;transform-origin:0 10.67px;transform:translateX(-47.000%) scale(0.9400,1.0);">Mar</span>
<span class="a" style="font-family:'Liberation Sans',sans-serif;font-size:12.6px;color:#f2f2f2;top:896.13px;left:718.44px;transform-origin:0 10.67px;transform:translateX(-47.000%) scale(0.9400,1.0);">Jun</span>
<span class="a" style="font-family:'Liberation Sans',sans-serif;font-size:12.6px;color:#f2f2f2;top:896.13px;left:754.64px;transform-origin:0 10.67px;transform:translateX(-47.000%) scale(0.9400,1.0);">Sep</span>
<span class="a" style="font-family:'Liberation Sans',sans-serif;font-size:12.6px;color:#f2f2f2;top:896.13px;left:790.84px;transform-origin:0 10.67px;transform:translateX(-47.000%) scale(0.9400,1.0);">Dec</span>
<span class="a" style="font-family:'Liberation Sans',sans-serif;font-size:12.6px;color:#f2f2f2;top:896.13px;left:827.04px;transform-origin:0 10.67px;transform:translateX(-47.000%) scale(0.9400,1.0);">Mar</span>
<span class="a" style="font-family:'Liberation Sans',sans-serif;font-size:12.6px;color:#f2f2f2;top:896.13px;left:863.24px;transform-origin:0 10.67px;transform:translateX(-47.000%) scale(0.9400,1.0);">Jun</span>
<span class="a" style="font-family:'Liberation Sans',sans-serif;font-size:12.6px;color:#f2f2f2;top:896.13px;left:899.44px;transform-origin:0 10.67px;transform:translateX(-47.000%) scale(0.9400,1.0);">Sep</span>
<span class="a" style="font-family:'Liberation Sans',sans-serif;font-size:12.6px;color:#f2f2f2;top:896.13px;left:935.64px;transform-origin:0 10.67px;transform:translateX(-47.000%) scale(0.9400,1.0);">Dec</span>
<span class="a" style="font-family:'Liberation Sans',sans-serif;font-size:12.6px;color:#f2f2f2;top:896.13px;left:971.84px;transform-origin:0 10.67px;transform:translateX(-47.000%) scale(0.9400,1.0);">Mar</span>
<span class="a" style="font-family:'Liberation Sans',sans-serif;font-size:12.6px;color:#f2f2f2;top:896.13px;left:1008.04px;transform-origin:0 10.67px;transform:translateX(-47.000%) scale(0.9400,1.0);">Jun</span>
<span class="a" style="font-family:'Liberation Sans',sans-serif;font-size:12.6px;color:#f2f2f2;top:896.13px;left:1044.24px;transform-origin:0 10.67px;transform:translateX(-47.000%) scale(0.9400,1.0);">Sep</span>
<span class="a" style="font-family:'Liberation Sans',sans-serif;font-size:12.6px;color:#f2f2f2;top:896.13px;left:1080.44px;transform-origin:0 10.67px;transform:translateX(-47.000%) scale(0.9400,1.0);">Dec</span>
<span class="a" style="font-family:'Liberation Sans',sans-serif;font-size:12.6px;color:#f2f2f2;top:896.13px;left:1116.64px;transform-origin:0 10.67px;transform:translateX(-47.000%) scale(0.9400,1.0);">Mar</span>
<span class="a" style="font-family:'Liberation Sans',sans-serif;font-size:12.6px;color:#f2f2f2;top:896.13px;left:1152.84px;transform-origin:0 10.67px;transform:translateX(-47.000%) scale(0.9400,1.0);">Jun</span>
<span class="a" style="font-family:'Liberation Sans',sans-serif;font-size:12.6px;color:#f2f2f2;top:896.13px;left:1189.04px;transform-origin:0 10.67px;transform:translateX(-47.000%) scale(0.9400,1.0);">Sep</span>
<span class="a" style="font-family:'Liberation Sans',sans-serif;font-size:12.6px;color:#f2f2f2;top:896.13px;left:1225.24px;transform-origin:0 10.67px;transform:translateX(-47.000%) scale(0.9400,1.0);">Dec</span>
<span class="a" style="font-family:'Liberation Sans',sans-serif;font-size:12.6px;color:#f2f2f2;top:896.13px;left:1261.44px;transform-origin:0 10.67px;transform:translateX(-47.000%) scale(0.9400,1.0);">Mar</span>
<span class="a" style="font-family:'Liberation Sans',sans-serif;font-size:12.6px;color:#f2f2f2;top:896.13px;left:1297.64px;transform-origin:0 10.67px;transform:translateX(-47.000%) scale(0.9400,1.0);">Jun</span>
<span class="a" style="font-family:'Liberation Sans',sans-serif;font-size:12.6px;color:#f2f2f2;top:896.13px;left:1333.84px;transform-origin:0 10.67px;transform:translateX(-47.000%) scale(0.9400,1.0);">Sep</span>
<span class="a" style="font-family:'Liberation Sans',sans-serif;font-size:12.6px;color:#f2f2f2;top:896.13px;left:1370.04px;transform-origin:0 10.67px;transform:translateX(-47.000%) scale(0.9400,1.0);">Dec</span>
<span class="a" style="font-family:'Liberation Sans',sans-serif;font-size:12.6px;color:#f2f2f2;top:896.13px;left:1406.24px;transform-origin:0 10.67px;transform:translateX(-47.000%) scale(0.9400,1.0);">Mar</span>
<span class="a" style="font-family:'Liberation Sans',sans-serif;font-size:12.6px;color:#f2f2f2;top:896.13px;left:1442.44px;transform-origin:0 10.67px;transform:translateX(-47.000%) scale(0.9400,1.0);">Jun</span>
<span class="a" style="font-family:'Liberation Sans',sans-serif;font-size:12.6px;color:#f2f2f2;top:912.03px;left:36.67px;transform-origin:0 10.67px;transform:translateX(-47.000%) scale(0.9400,1.0);">2013</span>
<span class="a" style="font-family:'Liberation Sans',sans-serif;font-size:12.6px;color:#f2f2f2;top:912.03px;left:139.23px;transform-origin:0 10.67px;transform:translateX(-47.000%) scale(0.9400,1.0);">2014</span>
<span class="a" style="font-family:'Liberation Sans',sans-serif;font-size:12.6px;color:#f2f2f2;top:912.03px;left:284.03px;transform-origin:0 10.67px;transform:translateX(-47.000%) scale(0.9400,1.0);">2015</span>
<span class="a" style="font-family:'Liberation Sans',sans-serif;font-size:12.6px;color:#f2f2f2;top:912.03px;left:428.83px;transform-origin:0 10.67px;transform:translateX(-47.000%) scale(0.9400,1.0);">2016</span>
<span class="a" style="font-family:'Liberation Sans',sans-serif;font-size:12.6px;color:#f2f2f2;top:912.03px;left:573.63px;transform-origin:0 10.67px;transform:translateX(-47.000%) scale(0.9400,1.0);">2017</span>
<span class="a" style="font-family:'Liberation Sans',sans-serif;font-size:12.6px;color:#f2f2f2;top:912.03px;left:718.44px;transform-origin:0 10.67px;transform:translateX(-47.000%) scale(0.9400,1.0);">2018</span>
<span class="a" style="font-family:'Liberation Sans',sans-serif;font-size:12.6px;color:#f2f2f2;top:912.03px;left:863.24px;transform-origin:0 10.67px;transform:translateX(-47.000%) scale(0.9400,1.0);">2019</span>
<span class="a" style="font-family:'Liberation Sans',sans-serif;font-size:12.6px;color:#f2f2f2;top:912.03px;left:1008.04px;transform-origin:0 10.67px;transform:translateX(-47.000%) scale(0.9400,1.0);">2020</span>
<span class="a" style="font-family:'Liberation Sans',sans-serif;font-size:12.6px;color:#f2f2f2;top:912.03px;left:1152.84px;transform-origin:0 10.67px;transform:translateX(-47.000%) scale(0.9400,1.0);">2021</span>
<span class="a" style="font-family:'Liberation Sans',sans-serif;font-size:12.6px;color:#f2f2f2;top:912.03px;left:1297.64px;transform-origin:0 10.67px;transform:translateX(-47.000%) scale(0.9400,1.0);">2022</span>
<span class="a" style="font-family:'Liberation Sans',sans-serif;font-size:12.6px;color:#f2f2f2;top:912.03px;left:1423.50px;transform-origin:0 10.67px;transform:translateX(-47.000%) scale(0.9400,1.0);">2023</span>
<span class="a" style="font-family:'Liberation Sans',sans-serif;font-size:13.8px;color:#ff8a0c;top:331.72px;left:1060.80px;transform-origin:0 11.68px;transform:scale(0.9808,1.0);">Hi: 8.0423</span>
<span class="a" style="font-family:'Liberation Sans',sans-serif;font-size:13.8px;color:#f2f2f2;top:476.62px;left:295.00px;transform-origin:0 11.68px;transform:scale(1.0488,1.0);">Hi: 5.11</span>
<span class="a" style="font-family:'Liberation Sans',sans-serif;font-size:13.8px;color:#ff8a0c;top:654.92px;left:5.30px;transform-origin:0 11.68px;transform:scale(0.9993,1.0);">Low: 1.90</span>
<span class="a" style="font-family:'Liberation Sans',sans-serif;font-size:13.8px;color:#f2f2f2;top:668.72px;left:905.80px;transform-origin:0 11.68px;transform:scale(0.9842,1.0);">Low: 1.62</span>
<span class="a" style="font-family:'Liberation Sans',sans-serif;font-size:13.8px;color:#f2f2f2;top:701.72px;left:1053.30px;transform-origin:0 11.68px;transform:scale(0.9776,1.0);">Hi: 323.2783</span>
<span class="a" style="font-family:'Liberation Sans',sans-serif;font-size:13.8px;color:#f2f2f2;top:878.72px;left:5.50px;transform-origin:0 11.68px;transform:scale(0.9876,1.0);">Low: 0.00</span>
</body></html>
